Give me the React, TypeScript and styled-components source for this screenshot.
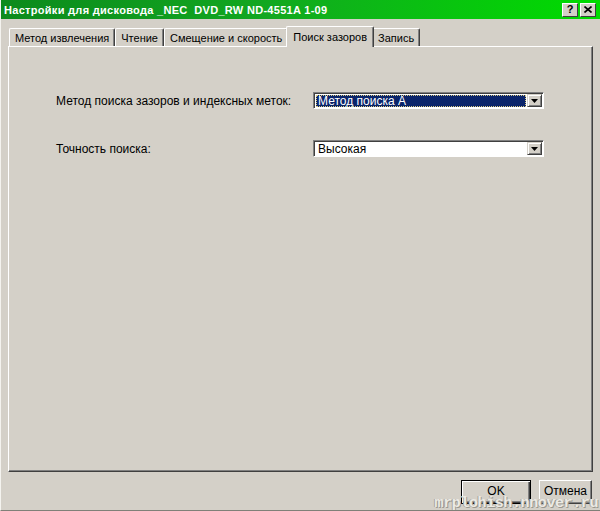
import React, { useState } from "react";
import styled, { createGlobalStyle } from "styled-components";

const GlobalStyle = createGlobalStyle`
    html, body {
        margin: 0;
        padding: 0;
        background: #d4d0c8;
    }
    body {
        font-family: "Liberation Sans", Arial, sans-serif;
        font-size: 11px;
        color: #000;
    }
`;

const Window = styled.div`
    position: relative;
    width: 600px;
    height: 511px;
    display: flex;
    flex-direction: column;
    background: #d4d0c8;
    border-left: 1px solid #f4f3ef;
    border-bottom: 1px solid #808078;
    box-sizing: border-box;
    overflow: hidden;
`;

const TitleBar = styled.div`
    height: 19px;
    display: flex;
    align-items: center;
    justify-content: space-between;
    padding: 0 4px 0 3px;
    background: linear-gradient(to right, #0c8a1c 0%, #12a820 45%, #00dc00 100%);
`;

const Title = styled.span`
    color: #fff;
    font-weight: bold;
    font-size: 11px;
    letter-spacing: 0.3px;
    white-space: pre;
`;

const TitleButtons = styled.div`
    display: flex;
    gap: 2px;
`;

const CaptionButton = styled.div`
    width: 14px;
    height: 12px;
    display: flex;
    align-items: center;
    justify-content: center;
    background: #d4d0c8;
    border: 1px solid;
    border-color: #fff #404040 #404040 #fff;
    font-weight: bold;
    font-size: 11px;
    line-height: 1;
    color: #000;
`;

const Body = styled.div`
    flex: 1;
    display: flex;
    flex-direction: column;
    padding: 5px 7px 0 7px;
`;

const TabStrip = styled.div`
    display: flex;
    align-items: flex-end;
    height: 22px;
    padding-left: 1px;
`;

const Tab = styled.div<{ $active?: boolean }>`
    height: ${(p) => (p.$active ? "21px" : "18px")};
    padding: 0 ${(p) => (p.$active ? "6px" : "5px")};
    margin: 0 ${(p) => (p.$active ? "-2px" : "0")};
    display: flex;
    align-items: center;
    box-sizing: border-box;
    background: #d4d0c8;
    border-top: 1px solid #fff;
    border-left: 1px solid #fff;
    border-right: 1px solid #404040;
    box-shadow: inset -1px 0 0 #808080;
    border-radius: 2px 2px 0 0;
    white-space: nowrap;
    position: relative;
    z-index: ${(p) => (p.$active ? 2 : 1)};
    margin-bottom: ${(p) => (p.$active ? "-1px" : "0")};
    cursor: default;
`;

const Panel = styled.div`
    height: 426px;
    border: 1px solid;
    border-color: #fff #404040 #404040 #fff;
    box-shadow: inset -1px -1px 0 #808080;
    box-sizing: border-box;
    padding: 45px 48px 0 47px;
    display: flex;
    flex-direction: column;
    gap: 31px;
`;

const FieldRow = styled.div`
    display: flex;
    align-items: center;
    justify-content: space-between;
`;

const Label = styled.span`
    white-space: nowrap;
    font-size: 12px;
`;

const Combo = styled.div`
    width: 231px;
    height: 17px;
    display: flex;
    box-sizing: border-box;
    background: #fff;
    border: 1px solid;
    border-color: #808080 #fff #fff #808080;
    box-shadow: inset 1px 1px 0 #404040;
    padding: 1px;
`;

const ComboValue = styled.div<{ $focused?: boolean }>`
    flex: 1;
    display: flex;
    align-items: center;
    padding-left: 2px;
    margin: 1px 1px 0 1px;
    font-size: 12px;
    color: ${(p) => (p.$focused ? "#fff" : "#000")};
    background: ${(p) => (p.$focused ? "#0a246a" : "transparent")};
    outline: ${(p) => (p.$focused ? "1px dotted #d8c880" : "none")};
    outline-offset: -1px;
    line-height: 1;
`;

const ComboArrow = styled.div`
    width: 13px;
    display: flex;
    align-items: center;
    justify-content: center;
    background: #d4d0c8;
    border: 1px solid;
    border-color: #d4d0c8 #404040 #404040 #d4d0c8;
    box-shadow: inset 1px 1px 0 #fff, inset -1px -1px 0 #808080;
`;

const Footer = styled.div`
    flex: 1;
    display: flex;
    justify-content: flex-end;
    align-items: flex-start;
    gap: 8px;
    padding: 8px 1px 0 0;
`;

const Button = styled.button<{ $default?: boolean }>`
    width: ${(p) => (p.$default ? "70px" : "53px")};
    height: 24px;
    font-family: "Liberation Sans", Arial, sans-serif;
    font-size: 12px;
    line-height: 14px;
    padding: 0 0 3px 0;
    color: #000;
    background: #d4d0c8;
    border: 1px solid;
    border-color: ${(p) => (p.$default ? "#000" : "#fff #404040 #404040 #fff")};
    box-shadow: ${(p) =>
        p.$default
            ? "inset 1px 1px 0 #fff, inset -1px -1px 0 #404040, inset -2px -2px 0 #808080"
            : "inset -1px -1px 0 #808080"};
`;

// site stamp printed over the bottom-right corner
const Watermark = styled.span`
    position: absolute;
    right: 2px;
    bottom: 0;
    font-family: "Liberation Mono", "DejaVu Sans Mono", monospace;
    font-size: 15px;
    line-height: 13px;
    font-weight: bold;
    letter-spacing: -0.4px;
    color: #eceae4;
    text-shadow: 1px 1px 0 #9a9890, -1px 0 0 #a8a69e;
    pointer-events: none;
`;

const tabs = ["Метод извлечения", "Чтение", "Смещение и скорость", "Поиск зазоров", "Запись"];

const Arrow: React.FC = () => (
    <svg width="7" height="4" viewBox="0 0 7 4">
        <path d="M0 0h7L3.5 4z" fill="#000" />
    </svg>
);

const App: React.FC = () => {
    const [activeTab, setActiveTab] = useState(3);

    return (
        <>
            <GlobalStyle />
            <Window>
                <TitleBar>
                    <Title>{"Настройки для дисковода _NEC  DVD_RW ND-4551A 1-09"}</Title>
                    <TitleButtons>
                        <CaptionButton>?</CaptionButton>
                        <CaptionButton>
                            <svg width="8" height="7" viewBox="0 0 8 7">
                                <path d="M0.5 0.5L7.5 6.5M7.5 0.5L0.5 6.5" stroke="#000" strokeWidth="1.6" />
                            </svg>
                        </CaptionButton>
                    </TitleButtons>
                </TitleBar>
                <Body>
                    <TabStrip>
                        {tabs.map((name, i) => (
                            <Tab key={name} $active={i === activeTab} onClick={() => setActiveTab(i)}>
                                {name}
                            </Tab>
                        ))}
                    </TabStrip>
                    <Panel>
                        <FieldRow>
                            <Label>Метод поиска зазоров и индексных меток:</Label>
                            <Combo>
                                <ComboValue $focused>Метод поиска A</ComboValue>
                                <ComboArrow><Arrow /></ComboArrow>
                            </Combo>
                        </FieldRow>
                        <FieldRow>
                            <Label>Точность поиска:</Label>
                            <Combo>
                                <ComboValue>Высокая</ComboValue>
                                <ComboArrow><Arrow /></ComboArrow>
                            </Combo>
                        </FieldRow>
                    </Panel>
                    <Footer>
                        <Button $default>OK</Button>
                        <Button>Отмена</Button>
                    </Footer>
                </Body>
                <Watermark>mrplohish.nnover.ru</Watermark>
            </Window>
        </>
    );
};

export default App;
